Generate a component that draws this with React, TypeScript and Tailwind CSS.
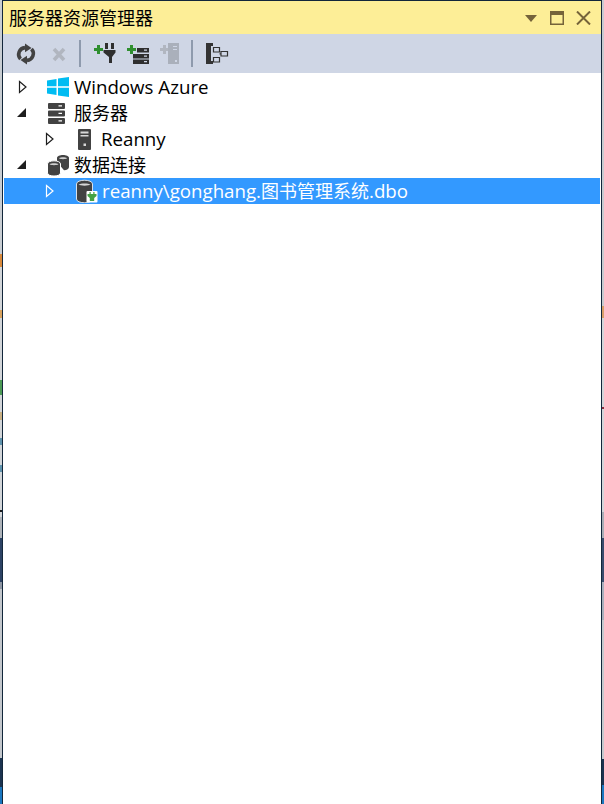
import type { ReactNode } from "react";

const leftStrip = [
  ["h-[254px]", "bg-[#c9ced3]"],
  ["h-[13px]", "bg-[#d98a3c]"],
  ["h-[43px]", "bg-[#d3d6d9]"],
  ["h-[8px]", "bg-[#d9a35f]"],
  ["h-[62px]", "bg-[#d3d6d9]"],
  ["h-[15px]", "bg-[#4c9a55]"],
  ["h-[17px]", "bg-[#d3d6d9]"],
  ["h-[8px]", "bg-[#c9b083]"],
  ["h-[18px]", "bg-[#d3d6d9]"],
  ["h-[7px]", "bg-[#5f93ad]"],
  ["h-[20px]", "bg-[#d3d6d9]"],
  ["h-[7px]", "bg-[#5f93ad]"],
  ["h-[38px]", "bg-[#d3d6d9]"],
  ["h-[2px]", "bg-[#1c1c1c]"],
  ["h-[5px]", "bg-[#d3d6d9]"],
  ["h-[21px]", "bg-[#aeb3b9]"],
  ["h-[44px]", "bg-[#2c4264]"],
  ["h-[7px]", "bg-[#8e96a3]"],
  ["h-[169px]", "bg-[#c3c7cc]"],
  ["h-[29px]", "bg-[#1b3350]"],
  ["h-[17px]", "bg-[#1a77c0]"],
];

const rightStrip = [
  ["h-[306px]", "bg-[#c9cbd0]"],
  ["h-[12px]", "bg-[#d9a06a]"],
  ["h-[89px]", "bg-[#d3d5d9]"],
  ["h-[2px]", "bg-[#8c2d3e]"],
  ["h-[103px]", "bg-[#d3d5d9]"],
  ["h-[26px]", "bg-[#a9aeb6]"],
  ["h-[44px]", "bg-[#3a4d6d]"],
  ["h-[38px]", "bg-[#aab0bc]"],
  ["h-[139px]", "bg-[#c6c9ce]"],
  ["h-[26px]", "bg-[#1b3350]"],
  ["h-[19px]", "bg-[#1a77c0]"],
];

function Strip({ segments }: { segments: string[][] }) {
  return (
    <div className="flex w-[2px] shrink-0 flex-col">
      {segments.map(([height, color], i) => (
        <div key={i} className={`${height} ${color}`} />
      ))}
    </div>
  );
}

function Icon({ width, children }: { width: number; children: ReactNode }) {
  return (
    <svg width={width} height="26" viewBox={`0 0 ${width} 26`} className="block shrink-0">
      {children}
    </svg>
  );
}

function Plus({ color = "#2f8f2f" }: { color?: string }) {
  return <path d="M3 5h3v3h3v3H6v3H3v-3H0V8h3z" fill={color} />;
}

function RefreshIcon() {
  return (
    <Icon width={22}>
      <g fill="none" stroke="#424242" strokeWidth="3.6">
        <path d="M5.500 19A6.800 6.800 0 0 1 10 7.600" />
        <path d="M16.500 9A6.800 6.800 0 0 1 12 20.400" />
      </g>
      <path d="M10 3.500l6.500 4.500-6.500 4.200z" fill="#424242" />
      <path d="M12 24.500l-6.500-4.500 6.500-4.200z" fill="#424242" />
    </Icon>
  );
}

function DeleteIcon() {
  return (
    <Icon width={16}>
      <path d="M3 9l10 11M13 9L3 20" stroke="#b1b6c0" strokeWidth="3.6" fill="none" />
    </Icon>
  );
}

function PlugIcon() {
  return (
    <Icon width={23}>
      <Plus />
      <path d="M11 3h3v6h-3zM17 3h3v6h-3zM9.500 10h12v2.500L18 17v6h-3v-6l-5.500-4.500z" fill="#2f2f2f" />
    </Icon>
  );
}

function ServerAddIcon() {
  return (
    <Icon width={23}>
      <Plus />
      <path d="M10 8h12v4.500H10zM6 14h16v4.500H6zM6 19.500h16V24H6z" fill="#2f2f2f" />
      <path d="M17 9.500h3v1.200h-3zM17 15.500h3v1.200h-3zM17 21h3v1.200h-3z" fill="#cfd6e5" />
    </Icon>
  );
}

function ServerDisabledIcon() {
  return (
    <Icon width={20}>
      <Plus color="#b1b6c0" />
      <path d="M8 3h11v21H8z" fill="#aab0bb" />
      <path d="M13 6h4v1h-4zM13 9h4v1h-4zM15 20h2v2h-2z" fill="#cfd6e5" />
    </Icon>
  );
}

function TreeViewIcon() {
  return (
    <Icon width={23}>
      <path d="M0 3h7v3H5v15h2v3H0z" fill="#333333" />
      <path d="M7.500 7.500h6v4.500h-6zM15 11.500h6.500V16H15zM7.500 17.500h6V22h-6zM13.500 13.800H15" fill="none" stroke="#333333" strokeWidth="1.200" />
    </Icon>
  );
}

function Separator({ className }: { className: string }) {
  return <div className={`h-[27px] w-[2px] bg-[#8e9aad] ${className}`} />;
}

function Toolbar() {
  return (
    <div className="flex h-[39px] shrink-0 items-start bg-[#cfd6e5] pl-[12px] pt-[6px]">
      <RefreshIcon />
      <div className="ml-[14px]">
        <DeleteIcon />
      </div>
      <Separator className="ml-[12px]" />
      <div className="ml-[13px]">
        <PlugIcon />
      </div>
      <div className="ml-[10px]">
        <ServerAddIcon />
      </div>
      <div className="ml-[10px]">
        <ServerDisabledIcon />
      </div>
      <Separator className="ml-[11px]" />
      <div className="ml-[13px]">
        <TreeViewIcon />
      </div>
    </div>
  );
}

function Chevron({ open, selected }: { open: boolean; selected?: boolean }) {
  return (
    <svg width="12" height="14" viewBox="0 0 12 14" className="block">
      {open ? (
        <path d="M1 11L10 2v9z" fill="#1e1e1e" />
      ) : (
        <path d="M2.500 1.500l6.500 5.500-6.500 5.500z" fill="none" stroke={selected ? "#ffffff" : "#1e1e1e"} strokeWidth="1.200" />
      )}
    </svg>
  );
}

function AzureIcon() {
  return (
    <svg width="22" height="20" viewBox="0 0 22 20" className="block">
      <path d="M0 3.500l9.500-1.600v7.400H0zM11 1.600L22 0v9.300H11zM0 10.700h9.500v7.400L0 16.500zM11 10.700h11V20l-11-1.600z" fill="#00bcf2" />
    </svg>
  );
}

function ServersIcon() {
  return (
    <svg width="17" height="22" viewBox="0 0 17 22" className="block">
      <path d="M1 1h15a1 1 0 0 1 1 1v4a1 1 0 0 1-1 1H1a1 1 0 0 1-1-1V2a1 1 0 0 1 1-1zM1 8.500h15a1 1 0 0 1 1 1v4a1 1 0 0 1-1 1H1a1 1 0 0 1-1-1v-4a1 1 0 0 1 1-1zM1 16h15a1 1 0 0 1 1 1v4a1 1 0 0 1-1 1H1a1 1 0 0 1-1-1v-4a1 1 0 0 1 1-1z" fill="#424242" />
      <path d="M10.500 3.200h3.500v1.400h-3.500zM10.500 10.700h3.500v1.400h-3.500zM10.500 18.200h3.500v1.400h-3.500z" fill="#ffffff" />
    </svg>
  );
}

function TowerIcon() {
  return (
    <svg width="13" height="21" viewBox="0 0 13 21" className="block">
      <rect width="13" height="21" rx="1" fill="#424242" />
      <path d="M2.500 2.500h8v2h-8zM2.500 6h8v1.500h-8zM5.500 14.500H8V17H5.500z" fill="#d9d9d9" />
    </svg>
  );
}

function DatabasesIcon() {
  return (
    <svg width="22" height="22" viewBox="0 0 22 22" className="block">
      <path d="M10 4c0-4 12-4 12 0v9c0 2-2 3-5 3.200L10 8z" fill="#424242" />
      <path d="M12 4.300c1.500-1.300 6.500-1.300 8 0-1.500 1.200-6.500 1.200-8 0z" fill="#cfcfcf" />
      <path d="M0.500 10c0-4.200 13-4.200 13 0v9c0 4-13 4-13 0z" fill="#424242" stroke="#ffffff" strokeWidth="1" />
      <path d="M2.500 10.300c2-1.300 7-1.300 9 0-2 1.200-7 1.200-9 0z" fill="#cfcfcf" />
    </svg>
  );
}

function ConnectedDbIcon() {
  return (
    <svg width="22" height="24" viewBox="0 0 22 24" className="block">
      <path d="M0.500 5c0-5 16-5 16 0v15c0 5-16 5-16 0z" fill="#424242" stroke="#ffffff" strokeWidth="0.800" />
      <path d="M2.500 5.500c2-1.500 10-1.500 12 0-2 1.500-10 1.500-12 0z" fill="#d6d6d6" />
      <rect x="10.500" y="12" width="11" height="11.500" rx="1" fill="#ffffff" />
      <path d="M13.500 13h1.200v2h-1.200zM17.300 13h1.200v2h-1.200zM11.500 15h9v2l-2.300 2v3h-4.400v-3l-2.300-2z" fill="#45a245" />
    </svg>
  );
}

type RowProps = {
  indent: string;
  open?: boolean;
  selected?: boolean;
  iconBox: string;
  icon: ReactNode;
  children: ReactNode;
};

function TreeRow({ indent, open = false, selected = false, iconBox, icon, children }: RowProps) {
  return (
    <div className={`flex h-[26px] items-center ${selected ? "bg-[#3399ff] text-white" : "text-black"}`}>
      <div className={`flex w-[12px] shrink-0 items-center ${indent}`}>
        <Chevron open={open} selected={selected} />
      </div>
      <div className={`flex shrink-0 items-center justify-center ${iconBox}`}>{icon}</div>
      <span className="whitespace-nowrap">{children}</span>
    </div>
  );
}

function Cjk({ children }: { children: ReactNode }) {
  return <span className="text-[18px]">{children}</span>;
}

export default function App() {
  return (
    <div className="flex h-[804px] w-[604px] overflow-hidden bg-white font-['Open_Sans','Noto_Sans_CJK_SC',sans-serif] text-[18.7px]">
      <Strip segments={leftStrip} />
      <div className="flex min-w-0 flex-1 flex-col border-x border-t border-[#12263a]">
        <div className="flex h-[33px] shrink-0 items-center justify-between bg-[#fdee97] pl-[6px] pr-[10px] text-[18px] text-black">
          <span className="font-['Noto_Sans_CJK_SC',sans-serif]">服务器资源管理器</span>
          <div className="flex items-center">
            <svg width="12" height="7" viewBox="0 0 12 7" className="mt-[1px] block">
              <path d="M0 0h12L6 7z" fill="#75633a" />
            </svg>
            <svg width="14" height="14" viewBox="0 0 14 14" className="ml-[13px] block">
              <path d="M0 0h14v14H0zM1.500 4v8.500h11V4z" fill="#75633a" fillRule="evenodd" />
            </svg>
            <svg width="15" height="14" viewBox="0 0 15 14" className="ml-[12px] mt-[1px] block">
              <path d="M1 0.500l13 13M14 0.500l-13 13" stroke="#75633a" strokeWidth="2" fill="none" />
            </svg>
          </div>
        </div>
        <Toolbar />
        <div className="flex flex-1 flex-col bg-white px-px pt-px">
          <TreeRow indent="ml-[13px]" iconBox="ml-[18px] mr-[5px] w-[22px]" icon={<AzureIcon />}>
            Windows Azure
          </TreeRow>
          <TreeRow indent="ml-[12px]" open iconBox="ml-[20px] mr-[9px] w-[17px]" icon={<ServersIcon />}>
            <Cjk>服务器</Cjk>
          </TreeRow>
          <TreeRow indent="ml-[40px]" iconBox="ml-[22px] mr-[10px] w-[13px]" icon={<TowerIcon />}>
            Reanny
          </TreeRow>
          <TreeRow indent="ml-[12px]" open iconBox="ml-[19px] mr-[5px] w-[22px]" icon={<DatabasesIcon />}>
            <Cjk>数据连接</Cjk>
          </TreeRow>
          <TreeRow indent="ml-[40px]" selected iconBox="ml-[20px] mr-[4px] w-[22px]" icon={<ConnectedDbIcon />}>
            reanny\gonghang.<Cjk>图书管理系统</Cjk>.dbo
          </TreeRow>
        </div>
      </div>
      <Strip segments={rightStrip} />
    </div>
  );
}
